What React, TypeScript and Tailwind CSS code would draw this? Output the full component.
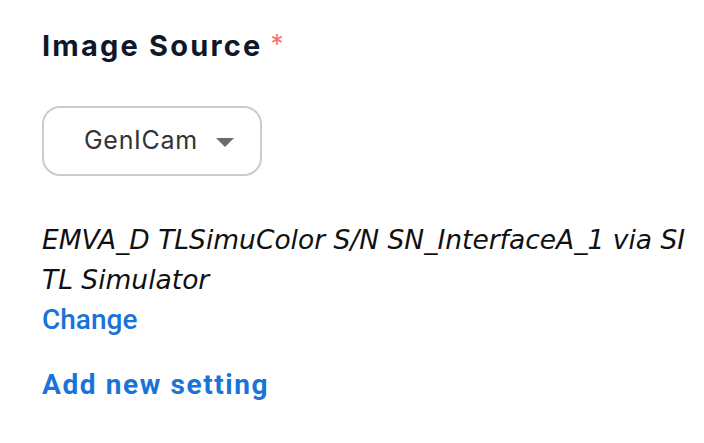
export default function App() {
  return (
    <div className="w-[704px] h-[443px] bg-white pl-[42px] pr-[10px] pt-[26px]">
      <h1 className="flex items-start text-[29px] font-bold tracking-[2.2px] text-[#0f172a] leading-[40px] font-['Inter',sans-serif]">
        Image Source
        <span className="ml-[8px] mt-[2px] text-[#f87171] text-[26px] font-normal leading-[32px] tracking-normal">*</span>
      </h1>
      <div className="mt-[40px]">
        <button className="flex items-center h-[70px] w-[220px] rounded-[18px] border-2 border-[#cccccc] pl-[40px] text-[25px] tracking-[0.7px] text-[#333333] font-['Inter',sans-serif]">
          GenICam
          <svg className="ml-[18px] mt-[2px]" width="18" height="9" viewBox="0 0 18 9">
            <path d="M0 0 L18 0 L9 9 Z" fill="#6b6b6b" />
          </svg>
        </button>
      </div>
      <p className="mt-[44px] italic text-[26.5px] leading-[40px] text-[#111111] font-['DejaVu_Sans',sans-serif]">
        EMVA_D TLSimuColor S/N SN_InterfaceA_1 via SI TL Simulator
      </p>
      <a className="block text-[28px] leading-[40px] font-medium text-[#1a73d8] font-['Roboto',sans-serif]">Change</a>
      <a className="block mt-[25px] text-[28px] leading-[40px] font-bold tracking-[1.6px] text-[#1a73d8] font-['Roboto',sans-serif]">Add new setting</a>
    </div>
  );
}
